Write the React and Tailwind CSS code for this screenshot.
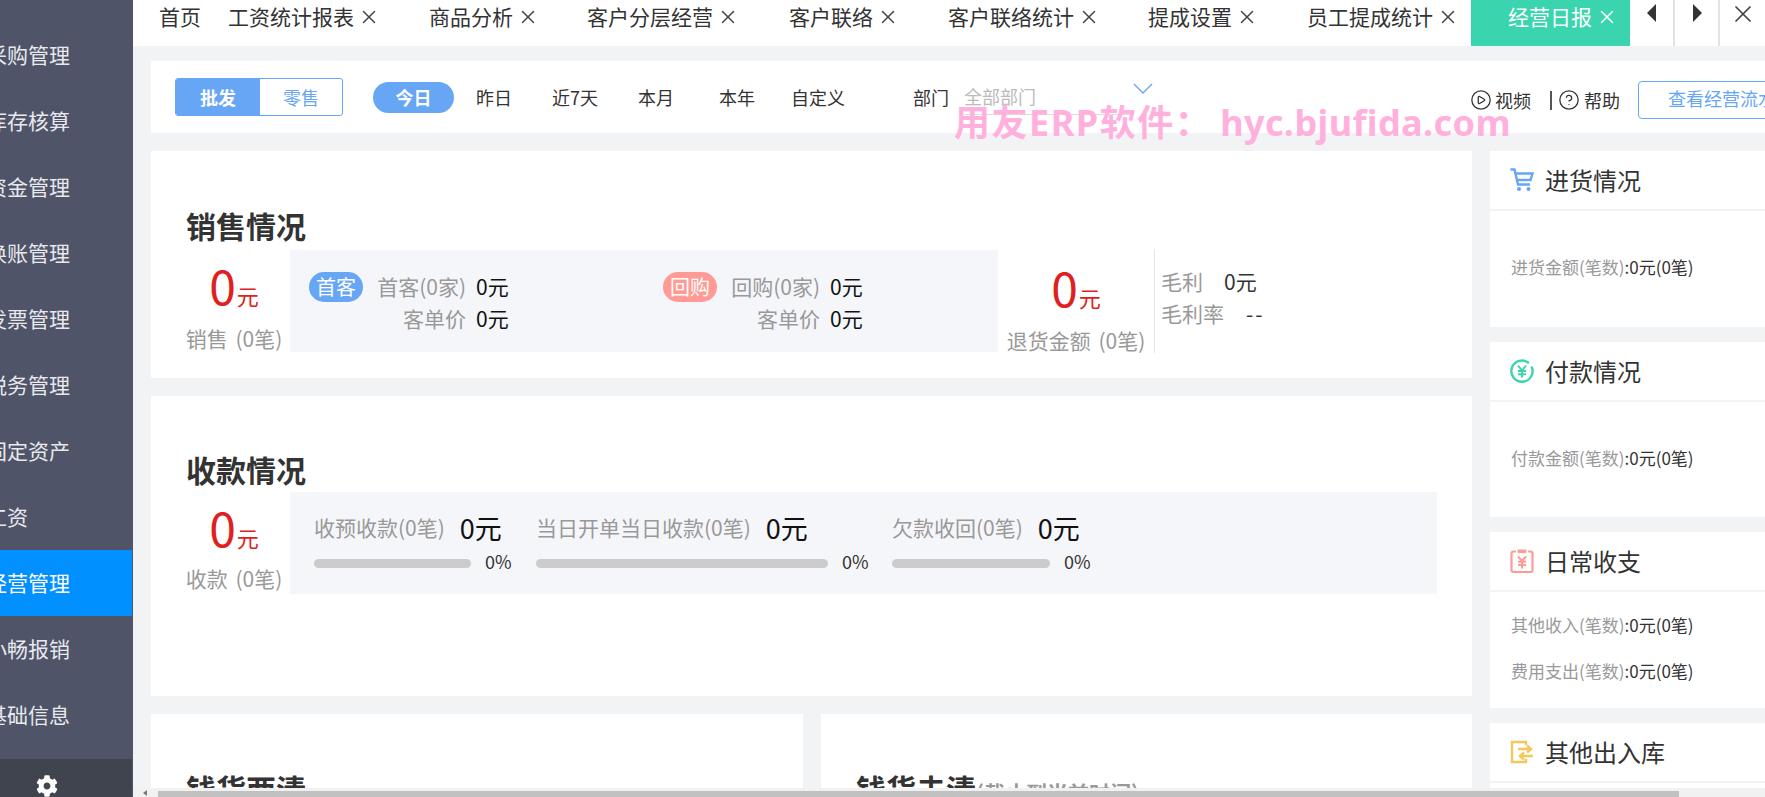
import { CirclePlay, CircleHelp, X } from 'lucide-react';
import { FaCog } from 'react-icons/fa';

const font = 'font-["Noto_Sans_CJK_SC","Liberation_Sans",sans-serif]';
const menu = ['采购管理', '库存核算', '资金管理', '换账管理', '发票管理', '税务管理', '固定资产', '工资', '经营管理', '小畅报销', '基础信息'];
const tabs = [
  ['工资统计报表', 'w-[201px]'],
  ['商品分析', 'w-[158px]'],
  ['客户分层经营', 'w-[202px]'],
  ['客户联络', 'w-[159px]'],
  ['客户联络统计', 'w-[200px]'],
  ['提成设置', 'w-[159px]'],
  ['员工提成统计', 'w-[164px]'],
];

function Sidebar() {
  return (
    <aside className="w-[133px] shrink-0 bg-[#4f5468] flex flex-col overflow-hidden">
      <div className="h-[22px] shrink-0" />
      {menu.map((m) => (
        <div key={m} className={`h-[66px] shrink-0 flex items-center whitespace-nowrap text-[21px] ${m === '经营管理' ? 'w-[132px] bg-[#0090ff] text-white' : 'text-[#e8e9ee]'}`}>
          <span className="-ml-[14px]">{m}</span>
        </div>
      ))}
      <div className="flex-1 mt-[11px] w-[132px] bg-[#40444f] pl-[36px] pt-[16px]">
        <FaCog size={22} className="text-white" />
      </div>
    </aside>
  );
}

function TabBar() {
  return (
    <div className="h-[46px] shrink-0 bg-white flex text-[21px] leading-[32px] text-[#333] whitespace-nowrap">
      <span className="ml-[26px] w-[69px]">首页</span>
      {tabs.map(([t, w]) => (
        <span key={t} className={`${w} flex items-start gap-[4px]`}>
          {t}
          <X size={22} strokeWidth={1.6} className="text-[#444] mt-[6px]" />
        </span>
      ))}
      <span className="h-full w-[159px] bg-[#3ad5ae] text-white flex items-start pl-[37px] gap-[4px]">
        经营日报
        <X size={22} strokeWidth={1.6} className="mt-[6px]" />
      </span>
      <span className="h-full w-[45px] border-r-2 border-[#e2e2e2] pl-[17px] pt-[4px]">
        <svg width="10" height="18" viewBox="0 0 10 18"><polygon points="9,0 9,18 0,9" fill="#333" /></svg>
      </span>
      <span className="h-full w-[45px] border-r-2 border-[#e2e2e2] pl-[17px] pt-[4px]">
        <svg width="10" height="18" viewBox="0 0 10 18"><polygon points="1,0 1,18 10,9" fill="#333" /></svg>
      </span>
      <span className="pl-[9px]"><X size={28} strokeWidth={1.5} className="text-[#444]" /></span>
    </div>
  );
}

function FilterBar() {
  return (
    <div className="relative h-[72px] shrink-0 mt-[15px] ml-[18px] bg-white flex items-center text-[18px] text-[#333] whitespace-nowrap *:shrink-0">
      <div className="ml-[24px] w-[168px] h-[38px] flex rounded-[3px] border border-[#66a6f5] overflow-hidden">
        <span className="w-[84px] bg-[#66a6f5] text-white font-bold flex items-center justify-center">批发</span>
        <span className="flex-1 text-[#66a6f5] flex items-center justify-center">零售</span>
      </div>
      <span className="ml-[30px] w-[81px] h-[31px] rounded-full bg-[#66a6f5] text-white font-bold flex items-center justify-center">今日</span>
      <span className="ml-[22px] w-[76px]">昨日</span>
      <span className="w-[86px]">近7天</span>
      <span className="w-[81px]">本月</span>
      <span className="w-[72px]">本年</span>
      <span className="w-[122px]">自定义</span>
      <span className="w-[51px]">部门</span>
      <span className="w-[168px] h-[36px] flex items-center text-[#bbb] border-b border-[#ddd]">全部部门</span>
      <svg className="-mt-[18px] ml-[1px]" width="20" height="11" viewBox="0 0 20 11" fill="none" stroke="#66a6f5" strokeWidth="1.4">
        <polyline points="1,1 10,10 19,1" />
      </svg>
      <div className="ml-[317px] mt-[6px] flex items-center *:shrink-0">
        <CirclePlay size={22} strokeWidth={1.4} className="text-[#333]" />
        <span className="ml-[3px]">视频</span>
        <span className="ml-[19px] w-[2px] h-[19px] bg-[#555]" />
        <CircleHelp size={22} strokeWidth={1.4} className="text-[#333] ml-[6px]" />
        <span className="ml-[4px]">帮助</span>
        <span className="ml-[18px] w-[160px] h-[38px] rounded-[4px] border border-[#66a6f5] text-[#66a6f5] flex items-center pl-[29px] pb-[3px]">查看经营流水</span>
      </div>
    </div>
  );
}

function CartIcon() {
  return (
    <svg width="24" height="24" viewBox="0 0 24 24" fill="none" stroke="#66a6f5" strokeWidth="2.4">
      <path d="M0.5 1.5H4.5L8 16.5H20" />
      <path d="M5.5 5.5H22.5L20.5 12H7" />
      <circle cx="9" cy="21" r="2" fill="#66a6f5" stroke="none" />
      <circle cx="18.5" cy="21" r="2" fill="#66a6f5" stroke="none" />
    </svg>
  );
}

function CoinIcon() {
  return (
    <svg width="24" height="24" viewBox="0 0 24 24" fill="none" stroke="#3ad5ae" strokeWidth="2.4">
      <path d="M19 4.2A10.6 10.6 0 1 0 21.5 7.5" />
      <path d="M8 6.5L12 11.5L16 6.5M12 11.5V18.5M8 12H16M8 15.2H16" strokeWidth="2" />
    </svg>
  );
}

function BillIcon() {
  return (
    <svg width="24" height="24" viewBox="0 0 24 24" fill="none" stroke="#ff9a94" strokeWidth="2.2">
      <path d="M6 2.5H3.5A2 2 0 0 0 1.5 4.5V21A2 2 0 0 0 3.5 23H20.5A2 2 0 0 0 22.5 21V4.5A2 2 0 0 0 20.5 2.5H18" />
      <rect x="7.5" y="0.5" width="9" height="3.5" rx="1" fill="#ff9a94" stroke="none" />
      <path d="M8 7.5L12 12L16 7.5M12 12V19.5M8 12.8H16M8 16H16" strokeWidth="2" />
    </svg>
  );
}

function DoorIcon() {
  return (
    <svg width="24" height="24" viewBox="0 0 24 24" fill="none" stroke="#f5c75c" strokeWidth="2.4">
      <path d="M16 5V2H2V22H16V19" />
      <path d="M8 9H21M17 5.5L21 9L17 12.5" />
      <path d="M23 16H10M14 12.5L10 16L14 19.5" />
    </svg>
  );
}

function RightCard({ title, icon, lines, h = 'h-[176px]' }) {
  return (
    <div className={`bg-white ${h} shrink-0 mb-[15px]`}>
      <div className="h-[60px] border-b-2 border-[#f2f3f5] flex items-center pl-[20px] gap-[11px] text-[24px] text-[#333]">
        {icon}
        {title}
      </div>
      <div className="h-[114px] flex flex-col justify-center gap-[20px] pl-[21px] pb-[3px] text-[17px]">
        {lines.map((l) => (
          <div key={l}><span className="text-[#999]">{l}</span><span className="text-[#333]">:0元(0笔)</span></div>
        ))}
      </div>
    </div>
  );
}

function BigZero({ label, top = 'pt-[10px]', gap = 'mt-[16px]', w = 'w-[96px] mr-[8px]' }) {
  return (
    <div className={`${w} shrink-0 ${top} flex flex-col items-center whitespace-nowrap`}>
      <div className="flex items-baseline text-[#e02020] leading-[48px] h-[48px]">
        <span className="text-[48px]">0</span>
        <span className="text-[22px] ml-[1px]">元</span>
      </div>
      <div className={`${gap} text-[21px] [word-spacing:3px] leading-[28px] text-[#999]`}>{label}</div>
    </div>
  );
}

function CustomerGroup({ tag, color, name }) {
  return (
    <div className="w-[354px] shrink-0 grid grid-cols-[54px_103px_auto] auto-rows-[32px] items-center text-[21px]">
      <span className={`${color} h-[30px] rounded-full text-[20px] text-white flex items-center justify-center`}>{tag}</span>
      <span className="text-[#999] text-right">{name}</span>
      <span className="pl-[10px] text-[#111]">0元</span>
      <span />
      <span className="text-[#999] text-right">客单价</span>
      <span className="pl-[10px] text-[#111]">0元</span>
    </div>
  );
}

function SalesCard() {
  return (
    <div className="bg-white h-[227px] shrink-0 pt-[55px] pl-[35px]">
      <h2 className="text-[30px] leading-[38px] h-[44px] font-bold text-[#333]">销售情况</h2>
      <div className="flex">
        <BigZero label="销售 (0笔)" />
        <div className="w-[708px] h-[102px] shrink-0 bg-[#f5f6fa] flex pl-[19px] pt-[21px] whitespace-nowrap">
          <CustomerGroup tag="首客" color="bg-[#66a6f5]" name="首客(0家)" />
          <CustomerGroup tag="回购" color="bg-[#ff9a94]" name="回购(0家)" />
        </div>
        <BigZero label="退货金额 (0笔)" top="pt-[12px]" w="w-[156px]" />
        <div className="w-px h-[104px] -mt-[1px] bg-[#e5e5e5]" />
        <div className="pl-[6px] pt-[16px] text-[21px] text-[#999] whitespace-nowrap">
          <div className="flex h-[32px] items-center"><span className="w-[63px]">毛利</span><span className="text-[#333]">0元</span></div>
          <div className="flex h-[32px] items-center"><span className="w-[85px]">毛利率</span><span className="text-[#333] tracking-[2px]">--</span></div>
        </div>
      </div>
    </div>
  );
}

function ProgressGroup({ label, w, barW }) {
  return (
    <div className={`${w} shrink-0 whitespace-nowrap`}>
      <div className="h-[36px] flex items-center">
        <span className="text-[21px] text-[#999]">{label}</span>
        <span className="ml-[15px] text-[27px] text-[#111]">0元</span>
      </div>
      <div className="mt-[6px] h-[22px] flex items-center">
        <div className={`${barW} h-[9px] rounded-full bg-[#ccc]`} />
        <span className="ml-[14px] -mt-[4px] text-[18px] text-[#333]">0%</span>
      </div>
    </div>
  );
}

function CollectCard() {
  return (
    <div className="bg-white h-[300px] shrink-0 pt-[54px] pl-[35px]">
      <h2 className="text-[30px] leading-[38px] h-[42px] font-bold text-[#333]">收款情况</h2>
      <div className="flex">
        <BigZero label="收款 (0笔)" gap="mt-[14px]" />
        <div className="w-[1147px] h-[102px] shrink-0 bg-[#f5f6fa] flex pl-[24px] pt-[18px]">
          <ProgressGroup label="收预收款(0笔)" w="w-[222px]" barW="w-[157px]" />
          <ProgressGroup label="当日开单当日收款(0笔)" w="w-[356px]" barW="w-[292px]" />
          <ProgressGroup label="欠款收回(0笔)" w="w-[300px]" barW="w-[158px]" />
        </div>
      </div>
    </div>
  );
}

function Watermark() {
  return (
    <div className='absolute left-[954px] top-[98px] font-["Noto_Sans","Noto_Sans_CJK_SC",sans-serif] text-[36px] leading-[50px] font-bold text-[#ffb0dc] whitespace-nowrap pointer-events-none'>
      <span className="tracking-[1.5px]">用友ERP软件：</span>
      <span className="ml-[8px] tracking-[0.4px]">hyc.bjufida.com</span>
    </div>
  );
}

export default function App() {
  return (
    <div className={`${font} relative h-[797px] w-[1765px] overflow-hidden flex bg-[#f2f3f5]`}>
      <Sidebar />
      <main className="flex-1 min-w-0 flex flex-col">
        <TabBar />
        <FilterBar />
        <div className="flex-1 min-h-0 pl-[18px] flex gap-[18px] pt-[18px] overflow-hidden">
          <div className="w-[1321px] shrink-0 flex flex-col gap-[18px]">
            <SalesCard />
            <CollectCard />
            <div className="flex gap-[18px] h-[200px] shrink-0">
              <div className="bg-white w-[652px] pt-[55px] pl-[35px]">
                <h2 className="text-[30px] leading-[38px] font-bold text-[#333]">钱货两清</h2>
              </div>
              <div className="bg-white flex-1 pt-[55px] pl-[35px] whitespace-nowrap">
                <h2 className="text-[30px] leading-[38px] font-bold text-[#333]">
                  钱货未清<span className="text-[21px] text-[#999]">(截止到当前时间)</span>
                </h2>
              </div>
            </div>
          </div>
          <div className="flex-1 min-w-0">
            <RightCard title="进货情况" icon={<CartIcon />} lines={['进货金额(笔数)']} />
            <RightCard title="付款情况" icon={<CoinIcon />} lines={['付款金额(笔数)']} h="h-[175px]" />
            <RightCard title="日常收支" icon={<BillIcon />} lines={['其他收入(笔数)', '费用支出(笔数)']} />
            <RightCard title="其他出入库" icon={<DoorIcon />} lines={[]} />
          </div>
        </div>
        <div className="h-[9px] shrink-0 bg-[#f1f1f1] flex items-end">
          <svg className="ml-[10px] mb-[1px]" width="5" height="6" viewBox="0 0 5 6"><polygon points="4,0 4,6 0,3" fill="#777" /></svg>
          <div className="ml-[10px] w-[1521px] h-[6px] bg-[#c1c1c1]" />
        </div>
      </main>
      <Watermark />
    </div>
  );
}
